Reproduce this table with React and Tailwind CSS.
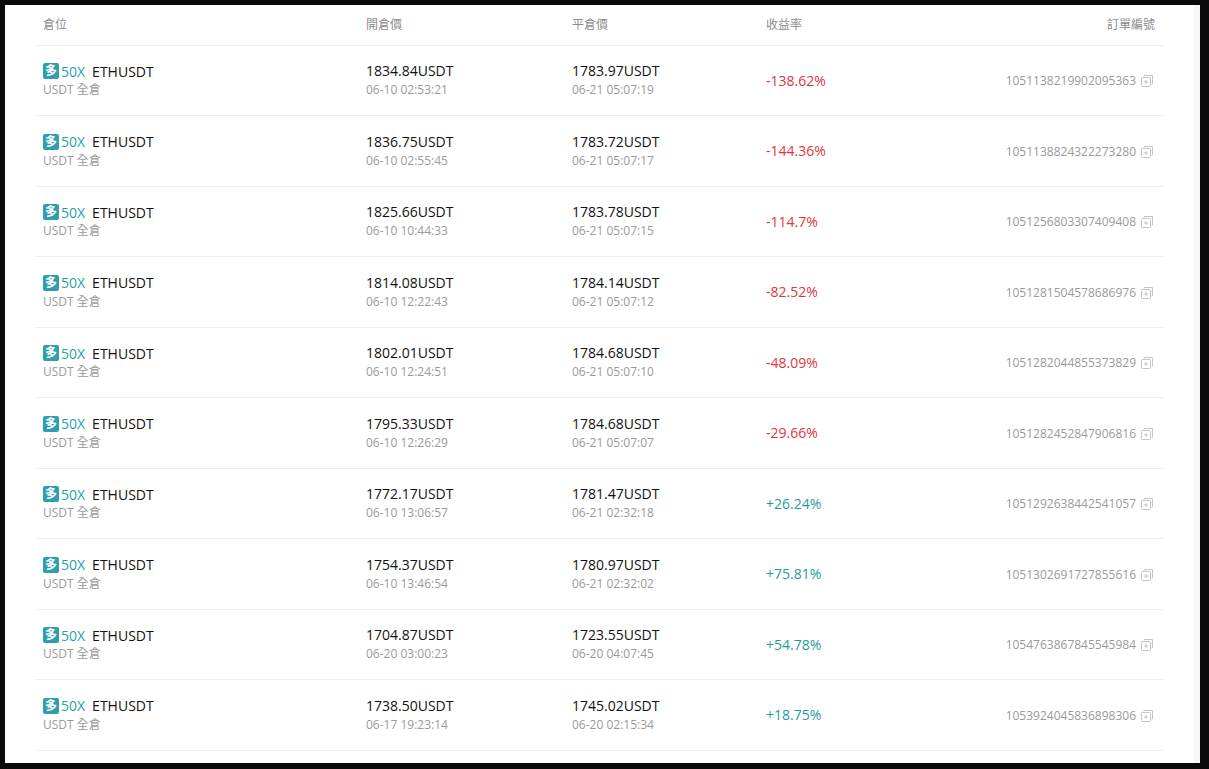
const rows = [
  { open: '1834.84', openTime: '06-10 02:53:21', close: '1783.97', closeTime: '06-21 05:07:19', pnl: '-138.62%', id: '1051138219902095363' },
  { open: '1836.75', openTime: '06-10 02:55:45', close: '1783.72', closeTime: '06-21 05:07:17', pnl: '-144.36%', id: '1051138824322273280' },
  { open: '1825.66', openTime: '06-10 10:44:33', close: '1783.78', closeTime: '06-21 05:07:15', pnl: '-114.7%', id: '1051256803307409408' },
  { open: '1814.08', openTime: '06-10 12:22:43', close: '1784.14', closeTime: '06-21 05:07:12', pnl: '-82.52%', id: '1051281504578686976' },
  { open: '1802.01', openTime: '06-10 12:24:51', close: '1784.68', closeTime: '06-21 05:07:10', pnl: '-48.09%', id: '1051282044855373829' },
  { open: '1795.33', openTime: '06-10 12:26:29', close: '1784.68', closeTime: '06-21 05:07:07', pnl: '-29.66%', id: '1051282452847906816' },
  { open: '1772.17', openTime: '06-10 13:06:57', close: '1781.47', closeTime: '06-21 02:32:18', pnl: '+26.24%', id: '1051292638442541057' },
  { open: '1754.37', openTime: '06-10 13:46:54', close: '1780.97', closeTime: '06-21 02:32:02', pnl: '+75.81%', id: '1051302691727855616' },
  { open: '1704.87', openTime: '06-20 03:00:23', close: '1723.55', closeTime: '06-20 04:07:45', pnl: '+54.78%', id: '1054763867845545984' },
  { open: '1738.50', openTime: '06-17 19:23:14', close: '1745.02', closeTime: '06-20 02:15:34', pnl: '+18.75%', id: '1053924045836898306' },
];

const FONT = { fontFamily: '"Open Sans", "Noto Sans CJK TC", sans-serif' };

// small "copy" icon next to the order number
function CopyIcon() {
  return (
    <svg width="14" height="14" viewBox="0 0 14 14" fill="none" className="ml-[4px]">
      <path d="M4 2.5V1.5H12.5V10H11.5" stroke="#c4c4c4" strokeWidth="1" />
      <rect x="1.5" y="3.5" width="9" height="9" rx="1" stroke="#c4c4c4" strokeWidth="1" />
      <path d="M6 6V10M4 8H8" stroke="#c4c4c4" strokeWidth="1" />
    </svg>
  );
}

function Row({ r }) {
  const up = r.pnl.startsWith('+');
  return (
    <div className="grid grid-cols-[323px_206px_194px_405px] h-[70.5px] border-b border-[#eeeeee] items-center">
      <div className="pl-[8px]">
        <div className="flex items-center h-[20px]">
          <span className="w-[16px] h-[16px] rounded-[2px] bg-[#2f9fae] text-white text-[12px] leading-[16px] flex items-center justify-center font-bold">多</span>
          <span className="text-[14px] text-[#1f9fa9] ml-[2px]">50X</span>
          <span className="text-[14px] text-[#111111] ml-[7px]">ETHUSDT</span>
        </div>
        <div className="text-[12px] leading-[18px] text-[#9a9a9a]">USDT 全倉</div>
      </div>
      <div className="pl-[8px]">
        <div className="text-[14px] leading-[20px] text-[#111111]">{r.open}USDT</div>
        <div className="text-[12px] leading-[18px] text-[#9a9a9a]">{r.openTime}</div>
      </div>
      <div className="pl-[8px]">
        <div className="text-[14px] leading-[20px] text-[#111111]">{r.close}USDT</div>
        <div className="text-[12px] leading-[18px] text-[#9a9a9a]">{r.closeTime}</div>
      </div>
      <div className="pl-[8px] flex items-center justify-between pr-[9px]">
        <span className={up ? 'text-[14px] text-[#1f9ca0]' : 'text-[14px] text-[#dc3640]'}>{r.pnl}</span>
        <span className="flex items-center text-[12px] text-[#9a9a9a] pt-[2px]">
          {r.id}
          <CopyIcon />
        </span>
      </div>
    </div>
  );
}

export default function App() {
  return (
    <div className="w-[1209px] h-[769px] bg-[#0a0a0a] pt-[5px] pl-[5px] pr-[9px] pb-[6px] flex" style={FONT}>
      <div className="flex-1 bg-white pl-[30px]">
        <div className="w-[1128px]">
          <div className="grid grid-cols-[323px_206px_194px_405px] h-[40.5px] border-b border-[#eeeeee] items-center text-[12px] text-[#8c8c8c]">
            <div className="pl-[8px]">倉位</div>
            <div className="pl-[8px]">開倉價</div>
            <div className="pl-[8px]">平倉價</div>
            <div className="pl-[8px] pr-[8px] flex justify-between">
              <span>收益率</span>
              <span>訂單編號</span>
            </div>
          </div>
          {rows.map((r) => (
            <Row key={r.id} r={r} />
          ))}
        </div>
      </div>
      <div className="w-[6px] bg-[#f6f7f9]" />
    </div>
  );
}
